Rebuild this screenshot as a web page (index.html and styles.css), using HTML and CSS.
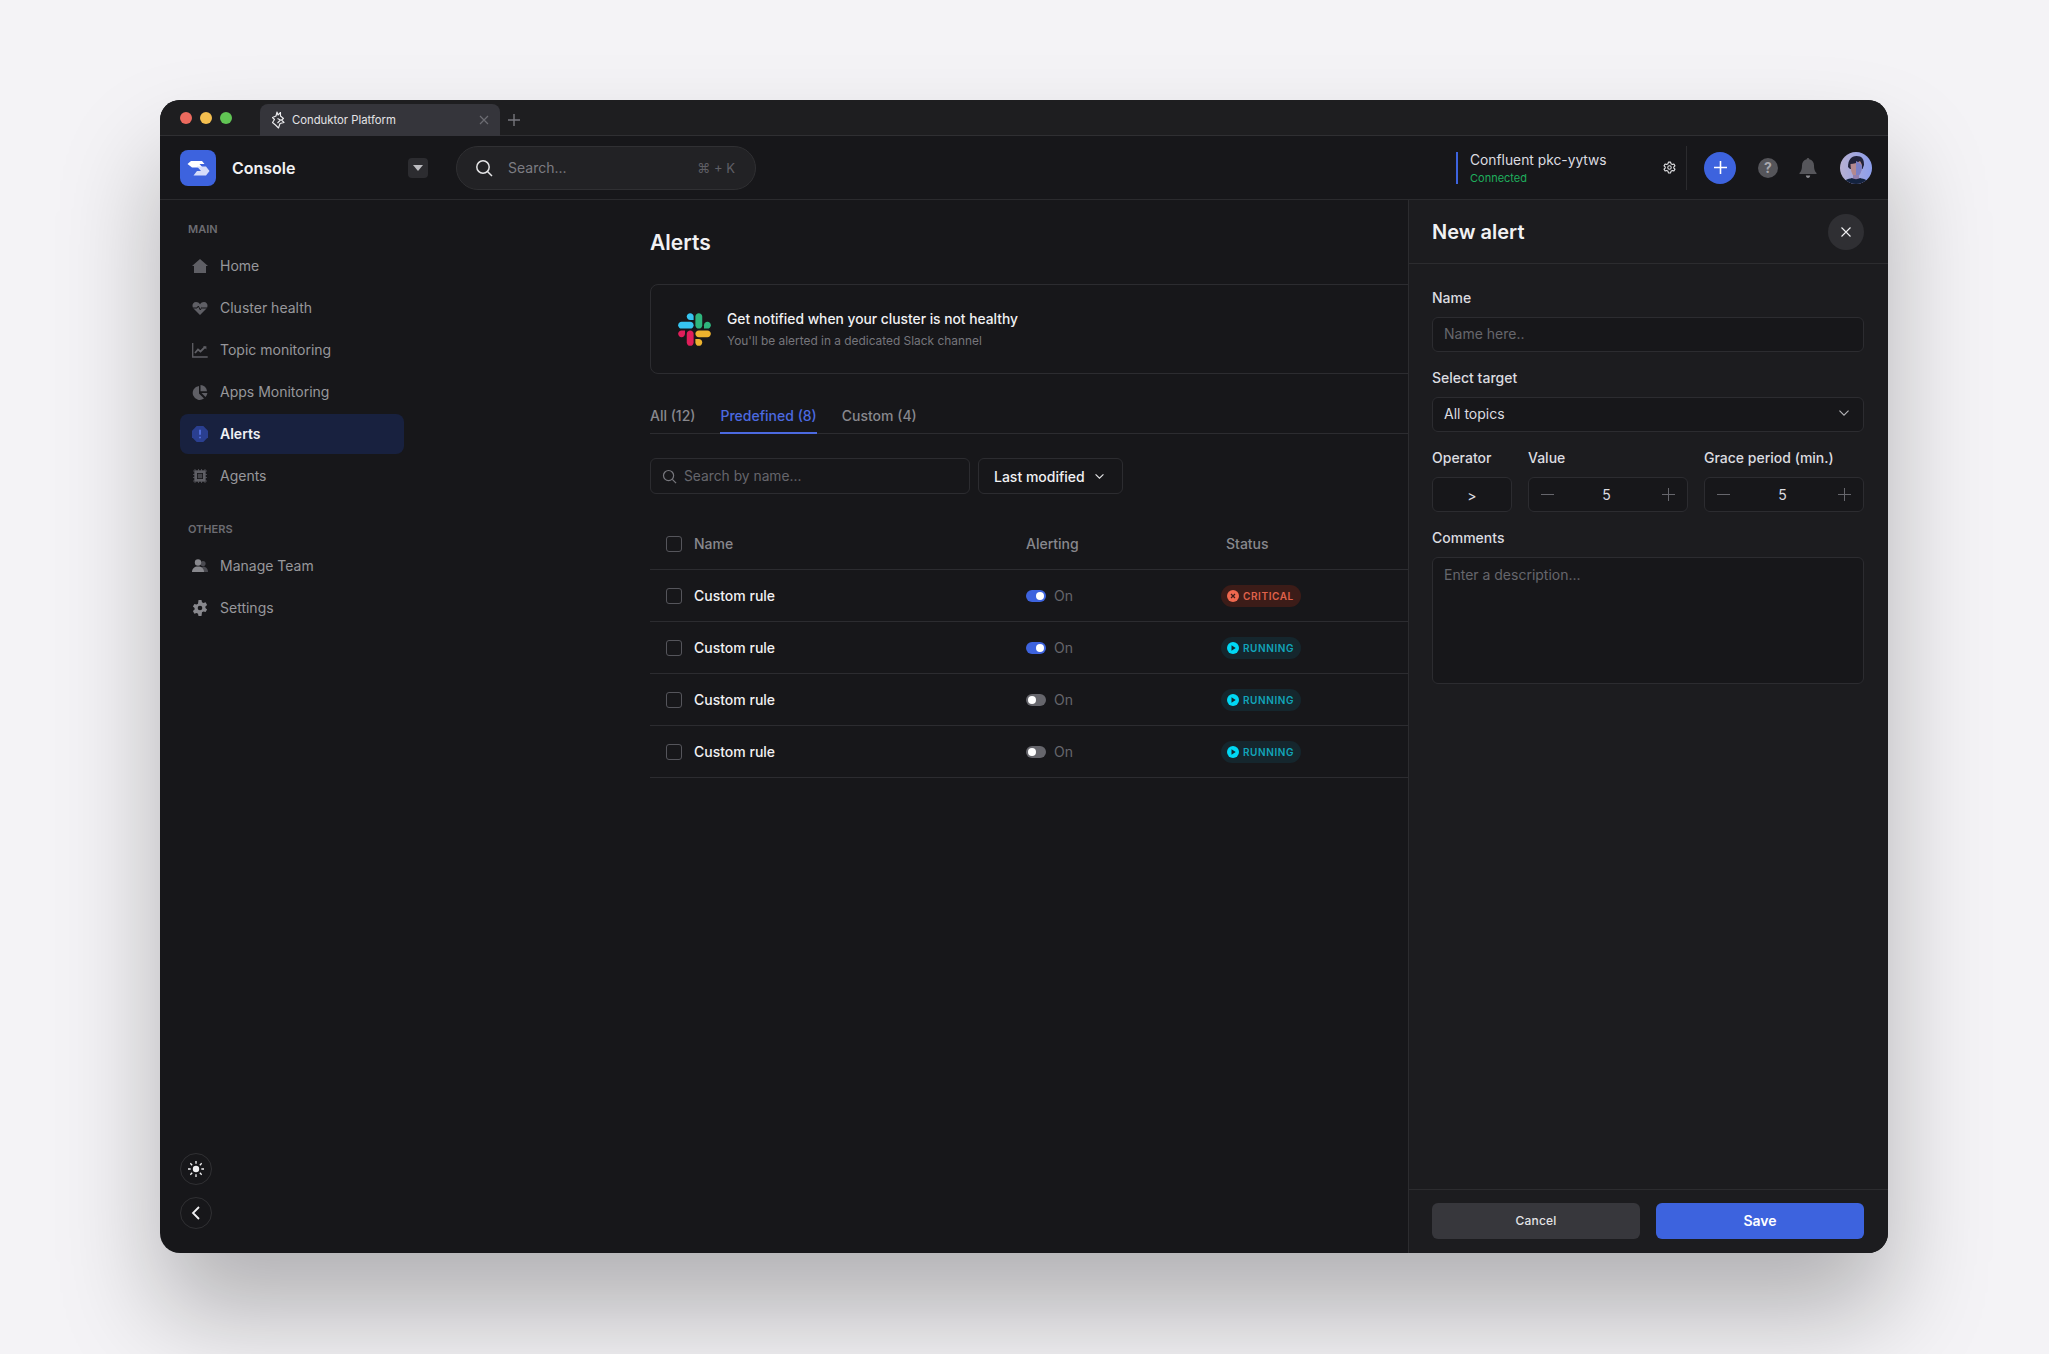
FILE: index.html
```html
<!DOCTYPE html>
<html>
<head>
    <meta charset="utf-8">
    <title>Conduktor Platform</title>
    <link rel="stylesheet" href="styles.css">
</head>
<body>
    <div class="window">
        <div class="tabbar">
            <div class="lights">
                <span class="light red"></span>
                <span class="light yellow"></span>
                <span class="light green"></span>
            </div>
            <div class="browser-tab">
                <svg class="tab-logo" viewBox="0 0 14 18" fill="none" stroke="#ececee" stroke-width="1.100" stroke-linejoin="round">
                    <path d="M6 1 7 4 9.500 1.500 9.500 5 12.500 7.500 10.500 9 13 11.500 9 12.500 7.500 17 4.500 14 1.500 11.500 3.500 8.500 1.500 6.500 5 5z"/>
                    <path d="M6.500 7.500 9.500 9 6.500 12"/>
                </svg>
                <span class="tab-title">Conduktor Platform</span>
                <svg class="tab-close" viewBox="0 0 10 10" stroke="#6c6c72" stroke-width="1.200"><path d="M1 1l8 8M9 1l-8 8"/></svg>
            </div>
            <svg class="tab-new" viewBox="0 0 12 12" stroke="#77777d" stroke-width="1.400"><path d="M6 0v12M0 6h12"/></svg>
        </div>

        <header class="topbar">
            <div class="brand">
                <svg class="brand-logo" viewBox="0 0 36 36">
                    <rect width="36" height="36" rx="8" fill="#3d63de"/>
                    <path d="M11 11h11l2.500 3h-5l3 3.500H12L7.500 14z" fill="#fff"/>
                    <path d="M17 16.500h9l3.500 4.500-3.500 4.500H13.500l3.500-4.500h4z" fill="#d5ddfa"/>
                </svg>
                <span class="brand-name">Console</span>
                <span class="brand-drop"><i></i></span>
            </div>
            <div class="global-search">
                <svg class="ico-search" viewBox="0 0 18 18" fill="none" stroke="#e4e4e6" stroke-width="1.500"><circle cx="8" cy="8" r="6.200"/><path d="M12.500 12.500 17 17"/></svg>
                <span class="global-search-text">Search...</span>
                <span class="shortcut">⌘ + K</span>
            </div>
            <div class="cluster">
                <div class="cluster-name">Confluent pkc-yytws</div>
                <div class="cluster-state">Connected</div>
            </div>
            <svg class="cluster-gear" viewBox="0 0 24 24" fill="none" stroke="#e4e4e6" stroke-width="2" stroke-linejoin="round">
                <circle cx="12" cy="12" r="3.200"/>
                <path d="M10 2h4l.7 3 2.500 1.400 2.900-.9 2 3.500-2.200 2v2l2.200 2-2 3.500-2.900-.9L14.700 19l-.7 3h-4l-.7-3-2.500-1.400-2.900.9-2-3.500 2.200-2V11L1.900 9l2-3.500 2.900.9L9.300 5z"/>
            </svg>
            <div class="top-actions">
                <button class="add-btn"><svg viewBox="0 0 14 14" stroke="#fff" stroke-width="1.700"><path d="M7 0v14M0 7h14"/></svg></button>
                <span class="help">?</span>
                <svg class="bell" viewBox="0 0 18 20" fill="#56565b">
                    <path d="M9 0c.8 0 1.300.6 1.300 1.300C13.300 2 15 4.500 15 7.500c0 4 .8 5.800 2.500 7.500v1H.5v-1C2.200 13.300 3 11.500 3 7.500c0-3 1.700-5.500 4.700-6.200C7.700.6 8.200 0 9 0z"/>
                    <path d="M6.800 17.500h4.400C11 19 10.200 20 9 20s-2-1-2.200-2.500z" fill="#8b8b90"/>
                </svg>
                <svg class="avatar" viewBox="0 0 32 32">
                    <defs>
                        <linearGradient id="avatar-bg" x1="0" y1="0" x2="1" y2="0">
                            <stop offset="0" stop-color="#b8b0d2"/>
                            <stop offset="1" stop-color="#8c9eec"/>
                        </linearGradient>
                        <clipPath id="avatar-clip"><circle cx="16" cy="16" r="16"/></clipPath>
                    </defs>
                    <g clip-path="url(#avatar-clip)">
                        <rect width="32" height="32" fill="url(#avatar-bg)"/>
                        <path d="M8 15c0-7 3-11 8.500-11S24 7 24 13l-1.500 4H10z" fill="#22233a"/>
                        <path d="M10.500 12c3 0 6.500-1 9.500-3 1 2 2 3 2 5 0 6-3 11-6 11s-5.500-5-5.500-13z" fill="#b4898f"/>
                        <path d="M16 9c2.500 1 5 3 6 5 0 6-3 11-6 11z" fill="#7a7fc6"/>
                        <path d="M13 23h6v3l6 6H7l6-6z" fill="#927fae"/>
                        <path d="M2 32c1-4 6-5 10-6 2 1.500 6 1.500 8 0 4 1 9 2 10 6z" fill="#14233f"/>
                    </g>
                </svg>
            </div>
        </header>

        <div class="body">
            <aside class="sidebar">
                <div class="nav-label">MAIN</div>
                <a class="nav-item">
                    <svg class="nav-ico" viewBox="0 0 16 16" fill="#5f5f65"><path d="M8 1 16 8h-2v7H2V8H0z"/></svg>
                    Home
                </a>
                <a class="nav-item">
                    <svg class="nav-ico" viewBox="0 0 16 16"><path d="M8 15 1.500 8.500C-.5 6.300.5 2 4 2c1.800 0 3 .9 4 2.200C9 2.900 10.200 2 12 2c3.500 0 4.500 4.300 2.500 6.500z" fill="#5f5f65"/><path d="M1 8h4l1.300-2 2 4 1.400-2.500.7.500H15" fill="none" stroke="#17171a" stroke-width="1"/></svg>
                    Cluster health
                </a>
                <a class="nav-item">
                    <svg class="nav-ico" viewBox="0 0 16 16" fill="none" stroke="#5f5f65" stroke-width="1.300"><path d="M.7 1v14h15"/><path d="M3 11l3-3.500 2.500 2L13 5" stroke-width="1.800"/><path d="M11 4.300h3.400v3.300z" fill="#5f5f65" stroke="none"/></svg>
                    Topic monitoring
                </a>
                <a class="nav-item">
                    <svg class="nav-ico" viewBox="0 0 16 16" fill="#5f5f65"><path d="M7 2v7.500l5 5A7 7 0 1 1 7 2z"/><path d="M8.500 1A6.800 6.800 0 0 1 15 7.200H8.500z"/><path d="M9.500 9H15.400a7 7 0 0 1-1.900 4z"/></svg>
                    Apps Monitoring
                </a>
                <a class="nav-item active">
                    <svg class="nav-ico" viewBox="0 0 16 16"><path d="M4.700 0h6.600L16 4.700v6.600L11.300 16H4.700L0 11.300V4.700z" fill="#2a3f90"/><path d="M8 3.800v5M8 10.800v1.400" stroke="#5b79ec" stroke-width="1.500"/></svg>
                    Alerts
                </a>
                <a class="nav-item">
                    <svg class="nav-ico" viewBox="0 0 16 16" fill="none"><path d="M3 1v14M6.500 1v14M9.500 1v14M13 1v14M1 3h14M1 6.500h14M1 9.500h14M1 13h14" stroke="#4a4a50" stroke-width="1"/><rect x="2.500" y="2.500" width="11" height="11" rx="1" fill="#5f5f65"/><rect x="5" y="5" width="6" height="6" fill="#17171a"/><rect x="5.800" y="5.800" width="4.400" height="4.400" fill="#45454a"/></svg>
                    Agents
                </a>
                <div class="nav-label others">OTHERS</div>
                <a class="nav-item">
                    <svg class="nav-ico" viewBox="0 0 16 16"><circle cx="11" cy="5.500" r="2.600" fill="#4a4a50"/><path d="M8 14c0-3 1-5.500 3-5.500s5 1.500 5 5.500z" fill="#4a4a50"/><circle cx="6" cy="4.500" r="3.200" fill="#88888d"/><path d="M0 14c0-3.500 2.500-5.500 6-5.500s6 2 6 5.500z" fill="#88888d"/></svg>
                    Manage Team
                </a>
                <a class="nav-item">
                    <svg class="nav-ico" viewBox="0 0 16 16"><path d="M6.500 0h3l.5 2.200 1.400.8 2.200-.7 1.500 2.600-1.700 1.500v1.600l1.700 1.500-1.500 2.600-2.200-.7-1.400.8L9.500 16h-3L6 13.800l-1.400-.8-2.200.7L.9 11.100l1.700-1.500V8L.9 6.500l1.500-2.600 2.200.7L6 3.800z" fill="#88888d"/><circle cx="8" cy="8" r="2.300" fill="#17171a"/></svg>
                    Settings
                </a>
                <div class="side-foot">
                    <button class="round-btn">
                        <svg viewBox="0 0 18 18" stroke="#f1f1f3" stroke-width="1.500"><circle cx="9" cy="9" r="3.600" fill="#f1f1f3" stroke="none"/><path d="M9 0v3M9 15v3M0 9h3M15 9h3M2.600 2.600l2.100 2.100M13.300 13.300l2.100 2.100M2.600 15.400l2.100-2.100M13.300 4.700l2.100-2.100"/></svg>
                    </button>
                    <button class="round-btn">
                        <svg class="back" viewBox="0 0 10 14" fill="none" stroke="#f1f1f3" stroke-width="1.800"><path d="M8 1 2 7l6 6"/></svg>
                    </button>
                </div>
            </aside>

            <main class="content">
                <div class="content-inner">
                    <h1 class="page-title">Alerts</h1>
                    <div class="banner">
                        <svg class="slack" viewBox="0 0 124 124">
                            <path d="M26.400 78.200c0 7.100-5.800 12.900-12.900 12.900S.6 85.300.6 78.200c0-7.100 5.800-12.900 12.900-12.900h12.900v12.900z" fill="#E01E5A"/>
                            <path d="M32.900 78.200c0-7.100 5.800-12.900 12.900-12.900s12.900 5.800 12.900 12.900v32.300c0 7.100-5.800 12.900-12.900 12.900s-12.900-5.800-12.900-12.900V78.200z" fill="#E01E5A"/>
                            <path d="M45.800 26.400c-7.100 0-12.900-5.800-12.900-12.900S38.700.6 45.800.6s12.900 5.800 12.900 12.900v12.900H45.800z" fill="#36C5F0"/>
                            <path d="M45.800 32.900c7.100 0 12.900 5.800 12.900 12.900s-5.800 12.900-12.900 12.900H13.500C6.400 58.700.6 52.900.6 45.800s5.800-12.900 12.900-12.900h32.300z" fill="#36C5F0"/>
                            <path d="M97.600 45.800c0-7.100 5.800-12.900 12.900-12.900s12.900 5.800 12.900 12.900-5.800 12.900-12.900 12.900H97.600V45.800z" fill="#2EB67D"/>
                            <path d="M91.100 45.800c0 7.100-5.800 12.900-12.900 12.900s-12.900-5.800-12.900-12.900V13.500C65.300 6.400 71.100.6 78.200.6s12.900 5.800 12.900 12.900v32.300z" fill="#2EB67D"/>
                            <path d="M78.200 97.600c7.100 0 12.900 5.800 12.900 12.900s-5.800 12.900-12.900 12.900-12.900-5.800-12.900-12.900V97.600h12.900z" fill="#ECB22E"/>
                            <path d="M78.200 91.100c-7.100 0-12.900-5.800-12.900-12.900s5.800-12.900 12.900-12.900h32.300c7.100 0 12.900 5.800 12.900 12.900s-5.800 12.900-12.900 12.900H78.200z" fill="#ECB22E"/>
                        </svg>
                        <div>
                            <div class="banner-title">Get notified when your cluster is not healthy</div>
                            <div class="banner-sub">You'll be alerted in a dedicated Slack channel</div>
                        </div>
                    </div>

                    <nav class="tabs">
                        <a class="tab">All (12)</a>
                        <a class="tab current">Predefined (8)</a>
                        <a class="tab">Custom (4)</a>
                    </nav>

                    <div class="filters">
                        <label class="filter-search">
                            <svg viewBox="0 0 16 16" fill="none" stroke="#77777d" stroke-width="1.300"><circle cx="7" cy="7" r="5.400"/><path d="M11 11l4 4"/></svg>
                            <input type="text" placeholder="Search by name...">
                        </label>
                        <button class="filter-sort">
                            Last modified
                            <svg viewBox="0 0 12 8" fill="none" stroke="#e4e4e6" stroke-width="1.300"><path d="M1.500 1.500 6 6l4.500-4.500"/></svg>
                        </button>
                    </div>

                    <div class="table">
                        <div class="row head">
                            <span class="check"></span>
                            <span class="col-name">Name</span>
                            <span class="col-alert">Alerting</span>
                            <span class="col-status">Status</span>
                        </div>
                        <div class="row">
                            <span class="check"></span>
                            <span class="col-name">Custom rule</span>
                            <span class="col-alert"><i class="toggle on"></i>On</span>
                            <span class="col-status">
                                <span class="badge critical">
                                    <svg viewBox="0 0 12 12"><circle cx="6" cy="6" r="6" fill="#f0694f"/><path d="M4 4l4 4M8 4l-4 4" stroke="#3c1c18" stroke-width="1.200"/></svg>
                                    CRITICAL
                                </span>
                            </span>
                        </div>
                        <div class="row">
                            <span class="check"></span>
                            <span class="col-name">Custom rule</span>
                            <span class="col-alert"><i class="toggle on"></i>On</span>
                            <span class="col-status">
                                <span class="badge running">
                                    <svg viewBox="0 0 12 12"><circle cx="6" cy="6" r="6" fill="#00d8f5"/><path d="M4.500 3.200 8.700 6 4.500 8.800z" fill="#15262d"/></svg>
                                    RUNNING
                                </span>
                            </span>
                        </div>
                        <div class="row">
                            <span class="check"></span>
                            <span class="col-name">Custom rule</span>
                            <span class="col-alert"><i class="toggle"></i>On</span>
                            <span class="col-status">
                                <span class="badge running">
                                    <svg viewBox="0 0 12 12"><circle cx="6" cy="6" r="6" fill="#00d8f5"/><path d="M4.500 3.200 8.700 6 4.500 8.800z" fill="#15262d"/></svg>
                                    RUNNING
                                </span>
                            </span>
                        </div>
                        <div class="row">
                            <span class="check"></span>
                            <span class="col-name">Custom rule</span>
                            <span class="col-alert"><i class="toggle"></i>On</span>
                            <span class="col-status">
                                <span class="badge running">
                                    <svg viewBox="0 0 12 12"><circle cx="6" cy="6" r="6" fill="#00d8f5"/><path d="M4.500 3.200 8.700 6 4.500 8.800z" fill="#15262d"/></svg>
                                    RUNNING
                                </span>
                            </span>
                        </div>
                    </div>
                </div>
            </main>

            <section class="panel">
                <div class="panel-head">
                    <h2>New alert</h2>
                    <button class="panel-close"><svg viewBox="0 0 10 10" stroke="#f1f1f3" stroke-width="1.100"><path d="M.5.500l9 9M9.500.500l-9 9"/></svg></button>
                </div>
                <div class="panel-body">
                    <div class="field">
                        <label>Name</label>
                        <input class="control" type="text" placeholder="Name here..">
                    </div>
                    <div class="field">
                        <label>Select target</label>
                        <div class="control select">
                            All topics
                            <svg viewBox="0 0 12 8" fill="none" stroke="#b4b4b8" stroke-width="1.300"><path d="M.8.800 6 6l5.200-5.200"/></svg>
                        </div>
                    </div>
                    <div class="field-row">
                        <div class="field">
                            <label>Operator</label>
                            <div class="control operator">&gt;</div>
                        </div>
                        <div class="field">
                            <label>Value</label>
                            <div class="control stepper"><span class="minus"></span><span class="num">5</span><span class="plus"></span></div>
                        </div>
                        <div class="field">
                            <label>Grace period (min.)</label>
                            <div class="control stepper"><span class="minus"></span><span class="num">5</span><span class="plus"></span></div>
                        </div>
                    </div>
                    <div class="field">
                        <label>Comments</label>
                        <textarea class="control area" placeholder="Enter a description..."></textarea>
                    </div>
                </div>
                <div class="panel-foot">
                    <button class="btn cancel">Cancel</button>
                    <button class="btn save">Save</button>
                </div>
            </section>
        </div>
    </div>
</body>
</html>
```

FILE: styles.css
```css
* {
    box-sizing: border-box;
}

html, body {
    height: 100%;
}

body {
    margin: 0;
    padding: 100px 0 0 160px;
    background: #f4f3f6;
    font-family: "Inter", "Liberation Sans", sans-serif;
    color: #e8e8ea;
    overflow: hidden;
}

button {
    font-family: inherit;
    border: none;
    padding: 0;
    background: none;
    color: inherit;
}

svg {
    display: block;
    flex-shrink: 0;
}

.window {
    width: 1728px;
    height: 1153px;
    display: flex;
    flex-direction: column;
    background: #17171a;
    border-radius: 20px;
    overflow: hidden;
    box-shadow: 0 60px 100px rgba(0, 0, 0, 0.27);
}

/* browser chrome */
.tabbar {
    height: 36px;
    flex-shrink: 0;
    display: flex;
    align-items: flex-end;
    background: #1e1e20;
    border-bottom: 1px solid #2f2f32;
}

.lights {
    display: flex;
    gap: 8px;
    align-self: flex-start;
    padding: 12px 0 0 20px;
    width: 100px;
}

.light {
    width: 12px;
    height: 12px;
    border-radius: 50%;
}

.red { background: #ec6a5e; }
.yellow { background: #f4bf4f; }
.green { background: #61c554; }

.browser-tab {
    width: 240px;
    height: 32px;
    margin-bottom: -1px;
    display: flex;
    align-items: center;
    padding: 0 11px 0 11px;
    background: #35353b;
    border-radius: 8px 8px 0 0;
}

.tab-logo {
    width: 14px;
    height: 18px;
    margin-right: 7px;
}

.tab-title {
    flex: 1;
    font-size: 11.300px;
    color: #e4e4e6;
}

.tab-close {
    width: 10px;
    height: 10px;
}

.tab-new {
    width: 12px;
    height: 12px;
    margin: 0 0 9px 8px;
}

/* top bar */
.topbar {
    height: 64px;
    flex-shrink: 0;
    display: flex;
    align-items: center;
    padding: 0 16px 0 20px;
    border-bottom: 1px solid #2b2b2e;
}

.brand {
    display: flex;
    align-items: center;
    width: 248px;
}

.brand-logo {
    width: 36px;
    height: 36px;
    margin-right: 16px;
}

.brand-name {
    flex: 1;
    font-size: 16px;
    font-weight: 600;
    color: #f1f1f3;
}

.brand-drop {
    width: 20px;
    height: 20px;
    display: flex;
    align-items: center;
    justify-content: center;
    background: #2c2c30;
    border-radius: 4px;
}

.brand-drop i {
    border-left: 5px solid transparent;
    border-right: 5px solid transparent;
    border-top: 6px solid #bcbcc0;
}

.global-search {
    width: 300px;
    height: 44px;
    margin-left: 28px;
    display: flex;
    align-items: center;
    padding: 0 20px 0 18px;
    background: #222225;
    border: 1px solid #303033;
    border-radius: 22px;
}

.ico-search {
    width: 18px;
    height: 18px;
    margin-right: 15px;
}

.global-search-text {
    flex: 1;
    font-size: 14px;
    color: #7c7c82;
}

.shortcut {
    font-size: 13px;
    color: #5f5f65;
}

.cluster {
    margin-left: auto;
    width: 194px;
    height: 32px;
    padding-left: 12px;
    border-left: 2px solid #3d63de;
}

.cluster-name {
    font-size: 13.800px;
    line-height: 17px;
    color: #dcdce0;
}

.cluster-state {
    margin-top: 2px;
    font-size: 11px;
    line-height: 14px;
    color: #1fae5d;
}

.cluster-gear {
    width: 13px;
    height: 13px;
    margin-left: 13px;
}

.top-actions {
    height: 44px;
    margin-left: 10px;
    padding-left: 17px;
    display: flex;
    align-items: center;
    border-left: 1px solid #2b2b2e;
}

.add-btn {
    width: 32px;
    height: 32px;
    display: flex;
    align-items: center;
    justify-content: center;
    background: #3d63de;
    border-radius: 50%;
}

.add-btn svg {
    width: 13px;
    height: 13px;
}

.help {
    width: 20px;
    height: 20px;
    margin-left: 22px;
    background: #55555a;
    border-radius: 50%;
    font-size: 14px;
    font-weight: 700;
    line-height: 20px;
    text-align: center;
    color: #a8a8ad;
}

.bell {
    width: 18px;
    height: 20px;
    margin-left: 21px;
}

.avatar {
    width: 32px;
    height: 32px;
    margin-left: 23px;
}

/* layout under the top bar */
.body {
    flex: 1;
    min-height: 0;
    display: flex;
}

/* sidebar */
.sidebar {
    width: 270px;
    flex-shrink: 0;
    display: flex;
    flex-direction: column;
    padding: 20px 26px 24px 20px;
}

.nav-label {
    height: 18px;
    margin: 0 0 8px 8px;
    font-size: 11px;
    font-weight: 600;
    line-height: 18px;
    color: #6d6d73;
}

.nav-label.others {
    margin-top: 22px;
}

.nav-item {
    height: 40px;
    margin-bottom: 2px;
    display: flex;
    align-items: center;
    gap: 12px;
    padding: 0 0 1px 12px;
    border-radius: 8px;
    font-size: 14px;
    color: #97979c;
}

.nav-item.active {
    background: #18213f;
    font-weight: 600;
    color: #f1f1f3;
}

.nav-ico {
    width: 16px;
    height: 16px;
}

.side-foot {
    margin-top: auto;
    display: flex;
    flex-direction: column;
    gap: 12px;
}

.round-btn {
    width: 32px;
    height: 32px;
    display: flex;
    align-items: center;
    justify-content: center;
    border: 1px solid #303033;
    border-radius: 50%;
}

.round-btn svg {
    width: 16px;
    height: 16px;
}

.round-btn .back {
    width: 10px;
    height: 14px;
}

/* main column */
.content {
    flex: 1;
    min-width: 0;
    overflow: hidden;
    padding-left: 220px;
}

.content-inner {
    width: 1100px;
}

.page-title {
    margin: 0;
    height: 84px;
    padding-top: 29px;
    font-size: 21px;
    font-weight: 600;
    line-height: 28px;
    color: #f1f1f3;
}

.banner {
    height: 90px;
    display: flex;
    align-items: center;
    gap: 16px;
    padding-left: 27px;
    border: 1px solid #2c2c30;
    border-radius: 8px;
}

.slack {
    width: 33px;
    height: 33px;
}

.banner-title {
    font-size: 13.800px;
    font-weight: 500;
    line-height: 20px;
    color: #f1f1f3;
}

.banner-sub {
    margin-top: 3px;
    font-size: 11.900px;
    line-height: 18px;
    color: #76767c;
}

.tabs {
    height: 60px;
    display: flex;
    align-items: flex-end;
    gap: 25px;
    border-bottom: 1px solid #2c2c30;
}

.tab {
    height: 28px;
    margin-bottom: -1px;
    font-size: 14px;
    font-weight: 500;
    line-height: 20px;
    color: #88888d;
}

.tab.current {
    color: #4c6ae0;
    border-bottom: 2px solid #4c6ae0;
}

.filters {
    display: flex;
    gap: 8px;
    margin-top: 24px;
}

.filter-search {
    width: 320px;
    height: 36px;
    display: flex;
    align-items: center;
    gap: 7px;
    padding-left: 11px;
    border: 1px solid #2c2c30;
    border-radius: 6px;
}

.filter-search svg {
    width: 15px;
    height: 15px;
}

.filter-search input {
    flex: 1;
    min-width: 0;
    padding: 0 0 1px;
    border: none;
    outline: none;
    background: none;
    font-family: inherit;
    font-size: 13.800px;
    color: #e8e8ea;
}

.filter-search input::placeholder {
    color: #66666c;
}

.filter-sort {
    width: 145px;
    height: 36px;
    display: flex;
    align-items: center;
    justify-content: space-between;
    padding: 0 17px 0 15px;
    border: 1px solid #2c2c30;
    border-radius: 6px;
    font-size: 14px;
    font-weight: 500;
    color: #f1f1f3;
}

.filter-sort svg {
    width: 11px;
    height: 7px;
}

.table {
    margin-top: 24px;
}

.row {
    height: 52px;
    display: flex;
    align-items: center;
    padding-left: 16px;
    border-bottom: 1px solid #2c2c30;
}

.check {
    width: 16px;
    height: 16px;
    margin-right: 12px;
    border: 1px solid #55555b;
    border-radius: 3px;
}

.col-name {
    width: 332px;
    font-size: 14px;
    font-weight: 500;
    color: #f1f1f3;
}

.col-alert {
    width: 200px;
    display: flex;
    align-items: center;
    gap: 8px;
    font-size: 14px;
    color: #66666c;
}

.col-status {
    font-size: 14px;
}

.head .col-name,
.head .col-alert,
.head .col-status {
    font-weight: 500;
    color: #88888d;
}

.toggle {
    position: relative;
    width: 20px;
    height: 12px;
    background: #66666c;
    border-radius: 6px;
}

.toggle::after {
    content: "";
    position: absolute;
    top: 2px;
    left: 2px;
    width: 8px;
    height: 8px;
    background: #fff;
    border-radius: 50%;
}

.toggle.on {
    background: #3d63de;
}

.toggle.on::after {
    left: 10px;
}

.badge {
    width: 80px;
    height: 22px;
    margin-left: -5px;
    display: flex;
    align-items: center;
    gap: 4px;
    padding-left: 6px;
    border-radius: 11px;
    font-size: 10px;
    font-weight: 600;
    letter-spacing: 0.6px;
}

.badge svg {
    width: 12px;
    height: 12px;
}

.badge.critical {
    background: #3c1c18;
    color: #e0624b;
}

.badge.running {
    background: #15262d;
    color: #12a5ba;
}

/* side panel */
.panel {
    width: 480px;
    flex-shrink: 0;
    display: flex;
    flex-direction: column;
    background: #1c1c1f;
    border-left: 1px solid #2c2c2f;
}

.panel-head {
    height: 64px;
    flex-shrink: 0;
    display: flex;
    align-items: center;
    justify-content: space-between;
    padding: 0 24px 0 23px;
    border-bottom: 1px solid #2c2c2f;
}

.panel-head h2 {
    margin: 0;
    font-size: 20px;
    font-weight: 600;
    color: #f1f1f3;
}

.panel-close {
    width: 36px;
    height: 36px;
    display: flex;
    align-items: center;
    justify-content: center;
    background: #2f2f33;
    border-radius: 50%;
}

.panel-close svg {
    width: 10px;
    height: 10px;
}

.panel-body {
    flex: 1;
    padding: 24px 24px 0 23px;
}

.field {
    display: flex;
    flex-direction: column;
    margin-bottom: 16px;
}

.field label {
    height: 20px;
    margin-bottom: 9px;
    font-size: 14px;
    font-weight: 500;
    line-height: 20px;
    color: #dcdce0;
}

.field-row {
    display: grid;
    grid-template-columns: 80px 160px 160px;
    gap: 16px;
}

.control {
    height: 35px;
    background: #17171a;
    border: 1px solid #2c2c30;
    border-radius: 6px;
    font-family: inherit;
    font-size: 14px;
    color: #dcdce0;
    outline: none;
    padding: 0 11px 2px;
}

.control::placeholder {
    color: #66666c;
}

.select {
    display: flex;
    align-items: center;
    justify-content: space-between;
    padding-right: 13px;
}

.select svg {
    width: 12px;
    height: 7px;
}

.operator {
    display: flex;
    align-items: center;
    justify-content: center;
    padding: 1px 0 0;
}

.stepper {
    display: flex;
    align-items: center;
    justify-content: space-between;
    padding: 0 12px 1px;
}

.num {
    margin-left: -3px;
}

.minus,
.plus {
    position: relative;
    width: 13px;
    height: 13px;
}

.minus::before,
.plus::before,
.plus::after {
    content: "";
    position: absolute;
    background: #66666c;
}

.minus::before,
.plus::before {
    left: 0;
    right: 0;
    top: 6px;
    height: 1.500px;
}

.plus::after {
    top: 0;
    bottom: 0;
    left: 6px;
    width: 1.500px;
}

.area {
    height: 127px;
    padding: 8px 11px;
    resize: none;
}

.panel-foot {
    height: 64px;
    flex-shrink: 0;
    display: flex;
    gap: 16px;
    padding: 13px 24px 0 23px;
    border-top: 1px solid #2c2c2f;
}

.btn {
    flex: 1;
    height: 36px;
    padding-bottom: 1px;
    border-radius: 6px;
}

.cancel {
    background: #37373c;
    font-size: 12px;
    font-weight: 500;
    letter-spacing: 0.2px;
    color: #e4e4e6;
}

.save {
    background: #3d63de;
    font-size: 14px;
    font-weight: 600;
    color: #fff;
}
```
